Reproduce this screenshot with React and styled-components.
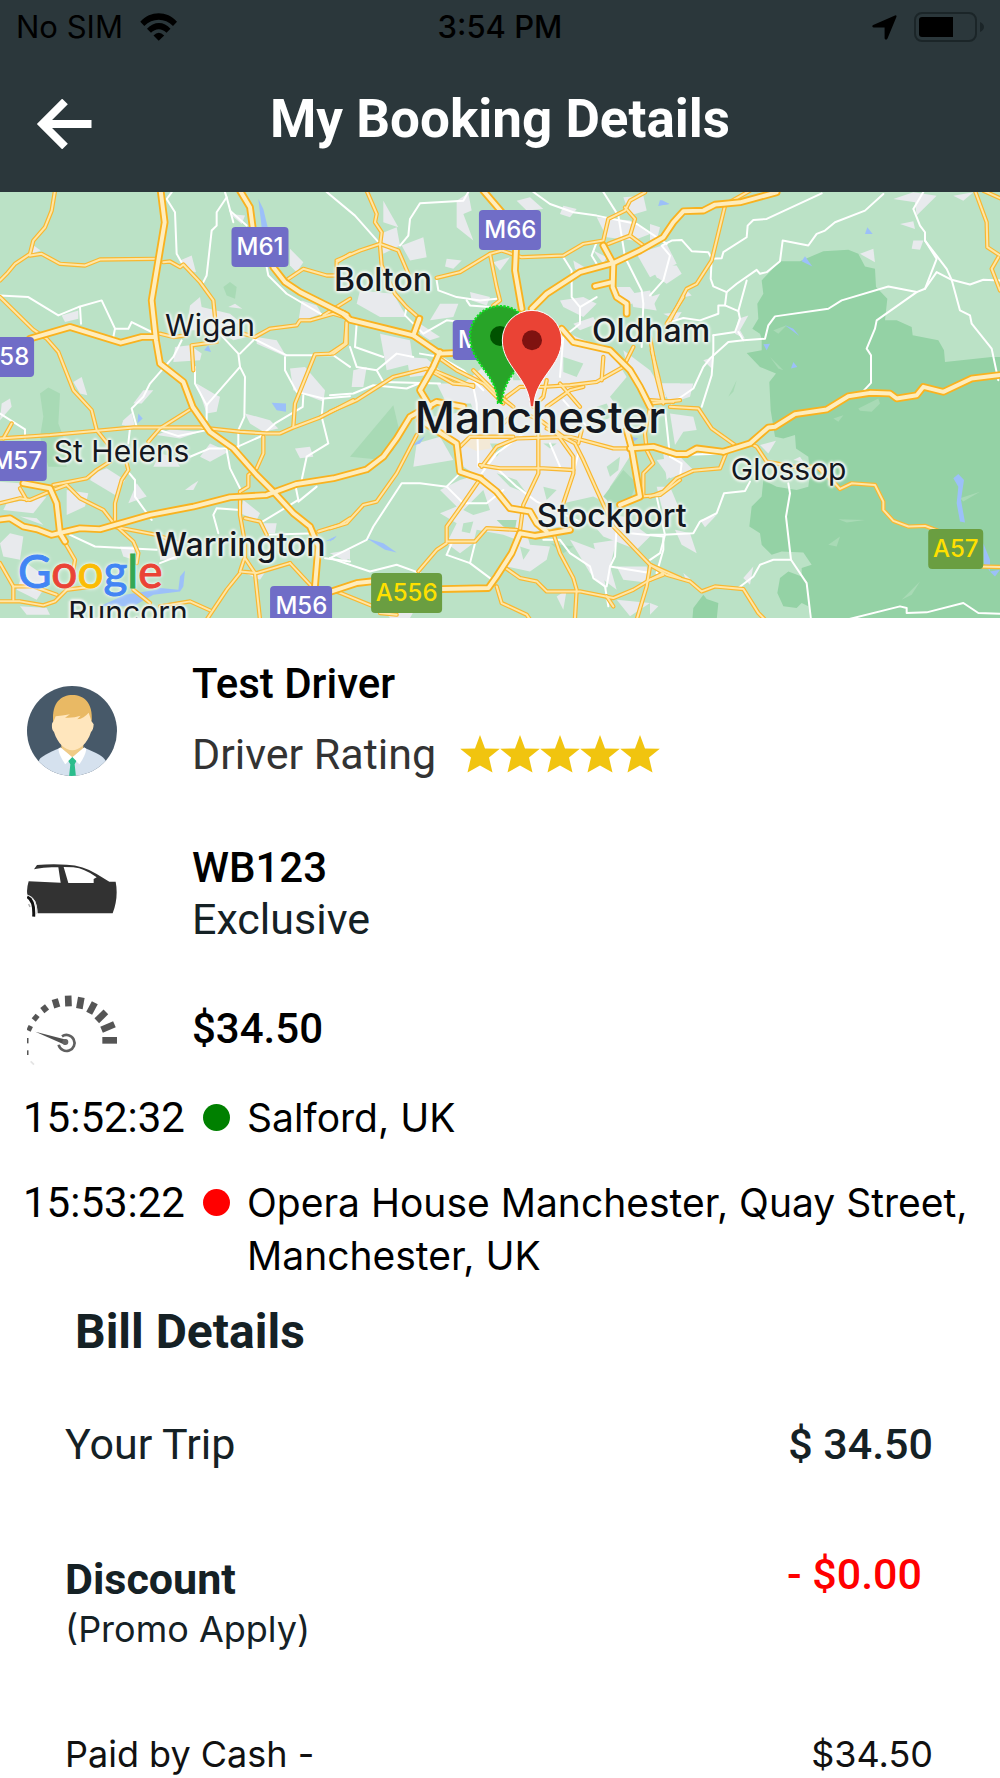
import React from "react";
import styled, { createGlobalStyle } from "styled-components";

const GlobalStyle = createGlobalStyle`
  * {
    box-sizing: border-box;
  }

  body {
    margin: 0;
    background: #ffffff;
    color: #000000;
    font-family: Roboto, sans-serif;
  }

  h1, h2, p, dl, dt, dd, ul {
    margin: 0;
    padding: 0;
  }
`;

const Header = styled.header`
  background: #2b373b;
  padding: 8px 16px 43px;
`;

const StatusBar = styled.div`
  display: grid;
  grid-template-columns: 1fr auto 1fr;
  align-items: center;
  color: #000000;
  font-family: Inter, sans-serif;
  font-size: 31px;
  line-height: 38px;
`;

const StatusGroup = styled.div`
  display: flex;
  align-items: center;
  justify-content: ${({ $end }) => ($end ? "flex-end" : "flex-start")};
  gap: 17px;
`;

const Clock = styled.span`
  font-weight: 500;
`;

const NavBar = styled.div`
  display: grid;
  grid-template-columns: 60px 1fr 60px;
  align-items: center;
  padding: 0 20px;
  margin-top: 43px;
`;

const BackButton = styled.button`
  display: flex;
  align-items: flex-end;
  height: 60px;
  padding: 0;
  border: 0;
  background: none;
  color: #ffffff;
  cursor: pointer;
`;

const Title = styled.h1`
  color: #ffffff;
  font-size: 53px;
  font-weight: 700;
  line-height: 60px;
  text-align: center;
`;

const MapArea = styled.section`
  position: relative;
  height: 426px;
  overflow: hidden;
  background: #bbe2c6;
`;

const MapLayer = styled.svg`
  position: absolute;
  inset: 0;
  width: 100%;
  height: 100%;
`;

const Place = styled.span`
  position: absolute;
  left: ${({ $x }) => ($x / 3000) * 100}%;
  top: ${({ $y }) => (($y - 4) / 1281) * 100}%;
  transform: translate(-50%, -50%);
  color: #14181f;
  font-family: Inter, sans-serif;
  font-size: ${({ $size }) => $size}px;
  font-weight: ${({ $bold }) => ($bold ? 500 : 400)};
  line-height: 1;
  white-space: nowrap;
  text-shadow: 0 0 2px #eef4ef, 2px 0 2px #eef4ef, -2px 0 2px #eef4ef,
    0 2px 2px #eef4ef, 0 -2px 2px #eef4ef, 0 0 4px #eef4ef;
`;

const Shield = styled.span`
  position: absolute;
  left: ${({ $x }) => ($x / 3000) * 100}%;
  top: ${({ $y }) => (($y - 4) / 1281) * 100}%;
  transform: translate(-50%, -50%);
  padding: 0 5px;
  border-radius: 4px;
  background: ${({ $green }) => ($green ? "#6a9e41" : "#706dc7")};
  color: ${({ $green }) => ($green ? "#ffe000" : "#ffffff")};
  font-family: Inter, sans-serif;
  font-size: 24px;
  font-weight: 500;
  line-height: 40px;
`;

const GoogleMark = styled.span`
  position: absolute;
  left: 18px;
  bottom: 19px;
  font-family: Lato, sans-serif;
  font-size: 46px;
  font-weight: 400;
  line-height: 56px;
  -webkit-text-stroke: 1px currentColor;
  text-shadow: 0 0 3px #ffffff, 0 0 5px #ffffff;
`;

const Letter = styled.span`
  color: ${({ $color }) => $color};
`;

const Summary = styled.section`
  padding: 44px 27px 0;
`;

const SummaryRow = styled.div`
  display: grid;
  grid-template-columns: 90px 1fr;
  column-gap: 75px;
  align-items: ${({ $align }) => $align || "center"};
  margin-bottom: ${({ $after }) => $after}px;
`;

const Stack = styled.div`
  display: flex;
  flex-direction: column;
  gap: ${({ $gap }) => $gap}px;
`;

const Strong = styled.p`
  font-size: 42px;
  font-weight: 500;
  line-height: 44px;
`;

const Plain = styled.p`
  display: flex;
  align-items: center;
  gap: 24px;
  color: ${({ $color }) => $color};
  font-size: 43px;
  line-height: 44px;
`;

const Stars = styled.span`
  display: flex;
`;

const Stops = styled.ul`
  display: flex;
  flex-direction: column;
  gap: 32px;
  padding: 0 23px;
  list-style: none;
`;

const Stop = styled.li`
  display: grid;
  grid-template-columns: 163px 27px 1fr;
  column-gap: 17px;
  font-size: 42px;
  line-height: 53px;
`;

const Dot = styled.span`
  width: 27px;
  height: 27px;
  margin-top: 13px;
  border-radius: 50%;
  background: ${({ $color }) => $color};
`;

const Address = styled.span`
  font-family: Inter, sans-serif;
  font-size: 39px;
`;

const Bill = styled.section`
  padding: 22px 67px 0 65px;
  color: #152125;
`;

const BillTitle = styled.h2`
  padding-left: 10px;
  font-size: 48px;
  font-weight: 700;
  line-height: 56px;
`;

const BillRow = styled.dl`
  display: flex;
  justify-content: space-between;
  margin-top: ${({ $before }) => $before}px;
  font-size: 43px;
  line-height: 44px;
`;

const DiscountLabel = styled.dt`
  padding-top: 5px;
  font-weight: 700;
`;

const Note = styled.p`
  margin-top: 6px;
  font-family: Inter, sans-serif;
  font-size: 36px;
  font-weight: 400;
`;

const Amount = styled.dd`
  font-weight: 500;
`;

const Deduction = styled(Amount)`
  padding-right: 11px;
  color: #ff0000;
`;

const PaidRow = styled(BillRow)`
  color: #111111;
  font-family: Inter, sans-serif;
  font-size: 36px;
`;

// Map geometry is kept in three tiles, each with its own x offset.
const TILES = [0, 990, 1950];

const motorways = [
  [
    "482,0 494,95 455,330 468,450 480,520 550,575 578,650 630,725 700,775 770,855 825,910 880,970 930,1010 955,1070 945,1190",
    "90,445 210,410 362,457 425,440 465,440",
    "-10,990 30,985 70,1010 110,1018 155,1035 240,1015 300,1018 450,975 580,950 690,922 800,915 890,882 1000,865 1100,838 1150,800 1190,745 1230,680 1310,635 1390,650",
    "70,880 150,895 170,940 180,1030 195,1055",
    "720,0 750,50 758,110",
    "820,230 855,275 900,305 1040,375",
  ],
  [
    "460,0 520,70",
    "558,175 555,240 575,355",
    "40,370 60,388 250,435 330,490 375,488",
    "268,385 250,435",
    "330,485 310,530 270,600 300,650",
    "5,1205 80,1180 123,1175",
    "337,1198 475,1195 500,1160 545,1090 570,1030 615,1038 720,1020",
    "270,690 310,715 380,760 390,845 450,865 500,905 540,955 600,965 620,1000 650,1025",
    "870,945 930,920 905,775 890,720",
    "605,355 650,310 750,245 850,218 930,180 1000,140 1030,95 1060,62 1120,60 1155,42 1230,35 1340,5",
    "820,165 850,220 848,290 860,320 890,340 890,370",
    "795,287 845,275",
    "695,415 730,455 840,480 900,540 930,590 960,650",
    "900,775 970,770 1040,792 1070,792 1100,775 1180,785",
  ],
  [
    "220,785 300,760 355,712 375,710 435,672 530,658 595,618 660,608 720,610 740,625 800,615 820,590 880,605 965,565 1060,553",
  ],
];

const mainRoads = [
  [
    "165,0 155,60 135,110 100,150 90,190 45,220 20,250 0,270",
    "90,195 125,190 180,220 255,225 300,207 470,205",
    "490,215 510,213 540,230 550,222 600,275 640,330 645,380",
    "0,320 100,418 140,445 175,485 220,600 275,660 290,720 330,770",
    "0,745 150,735 400,712 600,712 720,725 800,730 840,730 880,712 960,682 1060,630",
    "35,700 10,745",
    "575,655 480,715 445,755",
    "480,430 520,440 560,435",
    "730,430 765,440 810,415 890,405 900,390 930,390 1000,370 1050,385",
    "650,455 575,465 580,540",
    "0,940 60,925 90,930 160,900 200,885",
    "60,895 80,930",
    "160,885 260,865 290,840 330,815",
    "200,885 240,925 310,960 345,1005 400,1055 415,1090 410,1120",
    "380,820 385,840 365,870 345,940 345,990",
    "190,1050 225,1110 220,1140",
    "340,1010 470,1035 540,1060",
    "0,1120 40,1190 40,1230",
    "0,1235 60,1235 130,1247 165,1235 200,1200 280,1190",
    "40,1190 100,1190 170,1215",
    "400,1200 450,1240",
    "865,265 910,235 980,255 1010,255 1010,215 1050,190",
    "1040,395 1040,460 1000,490 945,492 885,640 880,710",
    "790,740 790,790 770,835 745,855 745,890 720,905 720,975 735,1060 735,1100 720,1145 770,1150 870,1120",
    "735,985 780,995 800,1035",
    "735,1105 765,1150 780,1290",
    "720,1150 680,1200 620,1290",
    "870,1120 935,1190",
    "955,1025 1020,1005 1050,985",
    "480,1250 570,1235 630,1262",
    "970,375 1050,325",
    "1000,1200 1060,1180",
  ],
  [
    "110,0 140,70 135,95 155,125 150,165 155,225 195,310 230,350 270,385",
    "20,210 90,180 150,160 205,180 235,250",
    "320,262 390,245 480,190 515,180 575,200 700,195 760,160 820,150 835,85 885,60 900,30 945,5",
    "480,190 500,290 510,330 490,345",
    "885,50 915,85 900,135 940,165",
    "835,160 900,135",
    "0,490 45,460 50,395",
    "0,665 80,630 190,560 290,535 370,580 430,585",
    "310,540 430,590",
    "430,540 500,610 550,650",
    "330,505 380,540 460,580 520,640",
    "530,620 570,590 640,590 720,585 800,575 880,530 910,470",
    "820,500 815,570",
    "650,650 720,600 760,590",
    "690,580 750,650",
    "610,650 640,620 650,570",
    "0,1015 50,1000 100,945 140,935 200,850 260,735",
    "455,830 500,770 560,745 720,740 850,775 900,775",
    "450,825 510,835 640,835 730,840",
    "455,860 400,940 350,1010 350,1055 435,1055 470,1015 560,1020",
    "350,1060 320,1080 265,1145",
    "625,720 625,850 580,945 570,1020",
    "650,715 735,760 760,810 800,900 850,1010 960,1125 1050,1165",
    "680,730 730,800 730,850 700,940",
    "550,740 420,740 390,770",
    "520,700 560,660 630,690 700,740",
    "745,760 755,720",
    "1060,320 1010,400",
    "960,640 1050,630",
    "965,480 985,560 1000,630",
    "960,650 945,730 950,780 970,820 940,850 940,915",
    "930,920 990,915 1050,870",
    "520,1130 570,1165 620,1175 650,1205 750,1205 850,1225 910,1200 960,1170 1000,1150",
    "670,1030 690,1090 730,1165 740,1200 735,1285",
    "500,1190 515,1240 590,1275 600,1290",
    "960,1130 950,1190 920,1290",
    "830,1220 850,1250",
    "20,1205 130,1250",
    "150,1270 200,1275",
  ],
  [
    "225,45 185,210 140,280 110,295 60,390",
    "220,45 300,0",
    "0,440 20,560 40,640",
    "0,630 70,635",
    "60,650 145,655 185,715 255,765",
    "300,760 320,770 350,815 430,830 500,830 555,880 570,897 605,880 675,885 700,935 700,960 730,993 775,1010 825,1008 870,1025",
    "230,785 210,835 130,842 80,865 40,905 0,920",
    "0,1125 50,1155 120,1175 155,1205 195,1190 280,1198 325,1270 345,1290",
    "975,0 1010,95 1012,170 1050,195",
    "1045,200 1025,235 1050,300",
    "1000,0 1055,25",
    "980,1130 1060,1132",
    "0,1170 40,1155",
  ],
];

const minorRoads = [
  [
    "515,5 500,25 525,65 530,190 550,225",
    "675,5 680,20 650,65 650,105 635,120 620,255 610,275",
    "680,20 700,95",
    "690,60 740,105",
    "980,4 1065,75 1140,160",
    "0,315 85,320 175,375 235,350 305,330 345,415 385,415 395,395 455,425",
    "240,350 243,400",
    "345,415 340,440",
    "800,230 805,255 860,310 970,375",
    "545,450 520,500 450,580 430,620 395,655 410,710",
    "585,530 585,580 620,645 720,530 715,490 650,420",
    "720,490 760,450",
    "720,530 735,560 733,680 715,720 715,775",
    "620,645 620,690",
    "760,445 860,495 1000,495 1050,530",
    "855,500 855,540 890,605 970,625 1050,618",
    "910,615 908,650 825,700 780,740 690,780",
    "970,625 965,680 985,760 920,800 905,870",
    "390,715 385,760",
    "380,840 405,870 405,920 455,990",
    "680,780 690,835 720,895",
    "570,800 630,775 680,775",
    "720,960 650,955 640,975 655,1030",
    "0,670 75,718 75,745",
    "210,1035 285,1070 470,1080",
    "885,880 895,930 780,1000",
    "950,890 895,935",
    "800,1035 950,1030",
    "975,1105 1050,1115",
    "480,720 535,738 620,720",
    "480,1120 530,1100",
  ],
  [
    "415,4 400,30 270,38 240,85 235,135 210,165",
    "610,4 660,40 730,65 800,75 920,100 1010,160",
    "820,4 865,75 885,200 935,300 940,340 935,470",
    "320,270 325,300 380,320 450,330 500,325",
    "410,330 420,345 480,350",
    "230,350 225,375 280,430 350,390 440,400",
    "270,490 330,500 400,540 460,600",
    "0,615 70,610 130,585 230,595 290,570",
    "60,470 80,530 140,540 200,490 250,500",
    "140,540 160,575 330,580",
    "80,400 75,470 160,500",
    "700,200 725,240 725,320 750,350 750,400 700,440 690,560",
    "750,350 800,320",
    "800,155 785,195 800,220",
    "0,1105 110,1050 130,1010 215,880 270,880 350,890 400,940 470,940 520,900",
    "0,1105 120,1145 200,1125 270,1150",
    "435,1060 420,1120 350,1095",
    "420,1120 480,1165",
    "350,1095 365,1060",
    "500,835 560,890 620,935 760,1000",
    "640,1050 690,1050 720,1090 780,1130 790,1165 825,1190 835,1250",
    "860,1010 855,1100 840,1130 830,1190",
    "840,1130 960,1150",
    "430,590 440,640 445,830",
    "660,760 690,830",
    "580,730 500,790 455,850",
    "730,850 745,790",
    "855,1000 900,1030 1000,1040 1000,1080 980,1150",
    "980,1150 1050,1165",
    "350,890 390,850",
    "700,630 780,720",
  ],
  [
    "515,8 350,85 310,88 293,105 290,140 220,185 215,203 185,205 175,185 125,182 95,148 65,150 35,165 60,195 40,270 0,315",
    "185,205 182,265 190,288 230,305 225,345 265,362 290,270",
    "230,305 260,280 320,238 330,250 350,245 390,212 398,150 475,165 500,130 525,120 555,95 645,60 700,10",
    "265,362 270,385 255,425 190,435",
    "225,345 205,345 205,370 150,390 100,383 60,395",
    "265,425 280,450 345,445 355,405 375,378 535,355 575,330 715,288 800,305 825,295 860,245 905,268 960,282 1000,268 1050,270",
    "280,450 235,455 180,505 160,530 130,595 65,640",
    "190,435 190,485 185,555 155,650",
    "820,4 790,55 810,105 825,125 825,150 890,235 905,268 930,360 960,375 965,400 1025,475 1045,570",
    "825,150 860,205 825,295",
    "800,305 680,390 675,415 650,475 663,495 663,578 635,608",
    "45,660 60,800 95,820 90,860",
    "95,795 220,790",
    "300,875 285,903 222,910 200,970 150,995 130,1030 40,1035 0,1035",
    "415,880 420,910 408,980 423,1110 470,1180 483,1290",
    "423,1110 370,1110 330,1125 310,1160 265,1195",
    "590,1290 750,1250 770,1255 770,1270 830,1268 940,1240 985,1270 1050,1272",
    "20,920 45,1035 30,1090 0,1110",
  ],
];

const urban = [
  [
    "95,160 122,180 95,190",
    "540,210 575,195 588,245 565,240",
    "570,345 600,320 605,350 690,370 720,395 670,420 740,440 700,450 655,420 560,420",
    "525,470 570,465 605,490 600,510 520,515",
    "770,440 830,450 860,500 770,460",
    "870,535 915,530 975,600 970,635 880,600",
    "870,175 910,215 890,245 870,225",
    "685,350 705,340 727,355",
    "905,330 950,345 965,370 895,395",
    "220,575 245,560 262,615 240,610",
    "185,375 235,360 235,385 195,395",
    "430,600 460,600 425,640 400,640",
    "590,580 650,615 660,620 650,665 620,670",
    "735,670 810,690 835,715 790,725 750,700",
    "370,690 395,668 405,710 365,705",
    "470,735 510,718 600,725 540,745",
    "600,800 630,760 685,785 630,815",
    "885,775 930,770 940,800 900,805",
    "690,70 735,75 725,100",
    "5,640 30,625 35,650 0,690",
    "0,875 60,880 80,920 0,940",
    "20,940 140,920 100,970 10,960",
    "200,900 265,910 255,950 200,975",
    "280,850 320,835 375,870 345,915 270,870",
    "385,940 410,880 440,920",
    "60,980 110,985 130,1005",
    "0,1060 30,1030 70,1040 60,1110 10,1100",
    "80,1120 150,1170 110,1230 50,1200",
    "60,1250 140,1255 150,1275 80,1275",
    "555,900 575,885 595,872 580,900",
    "480,790 520,800 540,830 460,830",
    "730,930 780,970 770,990 720,970",
    "790,1000 830,1000 825,1030 800,1030",
    "360,1070 405,1070 400,1110 370,1100",
    "990,1090 1050,1080 1050,1110",
    "480,1035 540,1060 530,1110 480,1110",
    "735,1150 800,1140 780,1170",
  ],
  [
    "150,130 200,110 210,165 160,190",
    "215,165 280,140 290,200 240,210",
    "90,300 190,310 230,380 150,380 80,340",
    "330,340 385,340 370,380 300,390",
    "160,30 205,110 160,95",
    "380,30 415,8 425,60 400,70 430,150 380,110",
    "490,215 540,200 510,240",
    "350,205 395,210 370,235 345,228",
    "420,305 480,320 470,345 425,330",
    "560,30 600,20 640,55 590,60",
    "700,45 740,55 720,80 690,70",
    "800,80 900,90 960,130 910,150 830,140",
    "880,20 940,15 950,60 900,75",
    "790,180 830,200 820,220",
    "730,210 780,240 760,250 735,235",
    "690,330 760,320 800,340 760,380 700,350",
    "920,190 1010,160 1040,220 960,260",
    "850,290 900,290 930,330 880,350",
    "900,310 960,300 980,360 910,350",
    "730,400 790,380 800,400 750,420",
    "70,540 110,530 100,590 65,590",
    "150,430 240,450 250,520 170,540",
    "230,500 290,505 340,550 240,560",
    "270,400 330,440 300,450 270,430",
    "320,580 420,580 440,640 350,640",
    "400,580 460,530 530,500 640,470 700,420 740,440 840,480 890,560 840,620 890,690 905,790 880,830 840,890 830,940 790,920 700,940 690,1010 590,1030 600,1065 660,1070 650,1110 600,1145 530,1130 560,1050 520,1035 440,1020 430,1060 390,1090 350,1060 380,1000 330,970 380,950 330,900 390,870 440,855 400,830 390,770 320,710 310,680 430,660",
    "260,760 330,740 370,810 250,830",
    "880,480 960,540 1010,620 960,650 900,560",
    "720,1050 800,1080 830,1200 780,1150",
    "790,1060 860,1050 840,1130 860,1200 820,1170",
    "860,1130 950,1130 960,1180 880,1170",
    "860,1230 960,1240 900,1280",
    "760,970 880,980 960,1040 920,1080 820,1040",
    "1000,790 1060,820 1010,870",
    "970,580 1050,580 1040,620",
    "680,1220 710,1200 700,1260",
    "0,1090 60,1090 50,1115",
    "160,1260 260,1250 240,1285 180,1285",
  ],
  [
    "0,225 80,225 95,250 50,280 20,260",
    "0,100 30,110 20,150 0,150",
    "40,370 95,365 80,390",
    "110,300 125,315 105,320",
    "265,385 295,375 270,420 285,445 255,430",
    "30,580 130,580 120,620 60,640",
    "160,510 190,500 185,535",
    "60,670 130,680 140,720 100,725 75,765",
    "20,810 90,800 130,840 60,865",
    "730,25 790,5 860,15 800,75 795,35",
    "630,190 670,175 675,215",
    "750,100 790,92 795,115",
    "790,150 820,150 810,178 785,175",
    "910,15 970,5 940,30",
    "330,765 378,752 355,790",
    "0,320 30,310 10,345",
    "20,890 60,890 85,950 40,970",
    "75,1020 120,1030 140,1090 95,1065",
    "280,1165 310,1130 300,1185",
    "150,990 200,975 165,1012",
    "100,1150 130,1175 110,1178",
    "0,1240 25,1250 0,1275",
    "430,810 450,800 460,815",
  ],
];

const moor =
  "390,212 450,212 520,182 595,178 625,190 645,228 675,235 678,290 712,325 705,390 740,390 785,410 788,435 865,450 882,480 885,515 1025,500 1060,500 1060,1290 480,1290 475,1250 455,1240 440,1255 400,1250 382,1210 390,1165 415,1145 455,1160 455,1135 485,1125 460,1088 395,1085 365,1095 335,1065 330,1030 298,1010 305,950 335,920 340,870 380,890 440,900 475,890 480,850 475,800 438,775 435,735 400,745 375,740 362,660 358,575 378,550 330,530 290,488 335,480 335,445 330,430 307,415 325,385 322,340 340,310 335,270";

const dale = "127,1290 130,1255 160,1215 170,1228 205,1240 200,1290";

const parks = [
  [
    "120,610 145,592 180,610 175,700 190,740 200,830 145,830 120,740 130,680",
    "670,290 690,275 710,290 705,325 680,315",
  ],
  [
    "60,800 190,645 210,730 190,780 160,810",
    "820,920 880,840 920,880 900,930 840,940",
    "500,990 560,990 555,1020 520,1010",
    "660,1060 730,1070 700,1090",
  ],
  [
    "370,420 410,405 385,430",
    "360,500 400,540 385,535",
    "625,655 685,625 690,640 665,665 630,662",
    "550,685 580,675 565,695",
    "930,925 990,905 940,935",
    "565,988 645,990 590,998",
    "755,1230 810,1175 785,1215",
    "235,620 260,570 250,605",
    "535,1065 570,1040 560,1070",
  ],
];

const greens = [
  [],
  [
    "545,545 590,535 580,570 550,570",
    "700,500 760,520 740,560 700,545",
    "800,650 830,640 850,680 820,690",
    "480,760 530,760 500,800",
    "640,760 680,760 660,775",
    "500,850 560,870 590,910 540,890",
    "460,900 480,960 430,975 400,960",
    "830,830 870,800 865,840 840,860",
    "570,1070 600,1080 580,1110",
    "400,1000 430,995 420,1030 395,1025",
    "640,890 680,900 650,930",
  ],
  [],
];

const water = [
  [
    "775,25 790,55 803,110 785,110",
    "612,480 625,465 633,485",
    "815,638 858,640 858,665 830,660",
    "415,670 428,685 412,700",
    "375,1215 470,1200 480,1195 535,1200 540,1160 555,1142 550,1190 540,1205 460,1215 400,1250 300,1250",
    "975,1055 1010,1038 1000,1050",
  ],
  [
    "985,45 990,28 1018,40",
    "110,1045 160,1060 200,1088 165,1080",
    "905,740 925,745 910,755",
    "240,770 285,738 270,760",
    "0,1048 20,1040 0,1055",
  ],
  [
    "25,45 35,28 58,40",
    "645,130 652,110 668,130",
    "455,212 465,197 487,228",
    "340,462 360,460 350,480",
    "423,535 430,515 442,530",
    "405,405 430,415 448,437",
    "910,865 925,852 942,870 933,930 945,998 930,995 920,940 925,890",
    "1000,1060 1020,1110 1020,1145 1002,1120",
    "1020,1145 1050,1140 1035,1160",
  ],
];

const places = [
  { name: "Wigan", x: 630, y: 403, size: 30 },
  { name: "St Helens", x: 365, y: 783, size: 30 },
  { name: "Warrington", x: 721, y: 1065, size: 32, bold: true },
  { name: "Runcorn", x: 384, y: 1268, size: 30 },
  { name: "Bolton", x: 1149, y: 268, size: 32, bold: true },
  { name: "Oldham", x: 1953, y: 421, size: 32, bold: true },
  { name: "Manchester", x: 1620, y: 680, size: 44, bold: true },
  { name: "Stockport", x: 1835, y: 977, size: 32, bold: true },
  { name: "Glossop", x: 2366, y: 838, size: 30 },
];

const shields = [
  { name: "M61", x: 780, y: 170 },
  { name: "M66", x: 1531, y: 118 },
  { name: "M58", x: 10, y: 501 },
  { name: "M57", x: 50, y: 814 },
  { name: "M56", x: 904, y: 1250 },
  { name: "M60", x: 1453, y: 449 },
  { name: "A556", x: 1220, y: 1209, green: true },
  { name: "A57", x: 2867, y: 1077, green: true },
];

const googleLetters = [
  ["G", "#4285f4"],
  ["o", "#ea4335"],
  ["o", "#fbbc04"],
  ["g", "#4285f4"],
  ["l", "#34a853"],
  ["e", "#ea4335"],
];

function Shapes({ tiles, fill }) {
  return TILES.map((x, i) => (
    <g key={x} transform={`translate(${x} 0)`} fill={fill}>
      {tiles[i].map((points) => (
        <polygon key={points} points={points} />
      ))}
    </g>
  ));
}

function Roads({ tiles, color, width }) {
  return TILES.map((x, i) => (
    <g
      key={x}
      transform={`translate(${x} 0)`}
      fill="none"
      stroke={color}
      strokeWidth={width}
      strokeLinejoin="round"
      strokeLinecap="round"
    >
      {tiles[i].map((points) => (
        <polyline key={points} points={points} />
      ))}
    </g>
  ));
}

function RouteMap() {
  return (
    <MapArea aria-label="Trip map">
      <MapLayer viewBox="0 4 3000 1281" preserveAspectRatio="none" aria-hidden="true">
        <g transform="translate(1950 0)" fill="#94d2a5">
          <polygon points={moor} />
          <polygon points={dale} />
        </g>
        <Shapes tiles={urban} fill="#e8eaed" />
        <Shapes tiles={parks} fill="#a8dab5" />
        <Shapes tiles={greens} fill="#bbe2c6" />
        <Shapes tiles={water} fill="#9cc0f9" />
        <polygon points="1390,765 1410,740 1470,745 1470,775 1430,783" fill="#f3e9d6" />
        <Roads tiles={minorRoads} color="#ffffff" width={6} />
        <Roads tiles={mainRoads} color="#f9b730" width={13} />
        <Roads tiles={mainRoads} color="#ffe6a6" width={6} />
        <Roads tiles={motorways} color="#f9b21f" width={23} />
        <Roads tiles={motorways} color="#ffedbd" width={12} />
      </MapLayer>
      {places.map((p) => (
        <Place key={p.name} $x={p.x} $y={p.y} $size={p.size} $bold={p.bold}>
          {p.name}
        </Place>
      ))}
      {shields.map((s) => (
        <Shield key={s.name} $x={s.x} $y={s.y} $green={s.green}>
          {s.name}
        </Shield>
      ))}
      <MapLayer viewBox="0 4 3000 1281" preserveAspectRatio="none" aria-hidden="true">
        <path
          d="M1506 638H1494C1492 550 1410 520 1410 437A90 90 0 0 1 1590 437C1590 520 1508 550 1506 638Z"
          fill="#28a428"
          stroke="#12dc22"
          strokeWidth="7"
          strokeDasharray="7 4"
        />
        <circle cx="1500" cy="437" r="30" fill="#005200" />
        <path
          d="M1601 650H1591C1588 560 1507 530 1507 449A89 89 0 0 1 1685 449C1685 530 1604 560 1601 650Z"
          fill="#ea4335"
          stroke="#ffffff"
          strokeWidth="3"
        />
        <circle cx="1596" cy="450" r="30" fill="#7f1210" />
      </MapLayer>
      <GoogleMark>
        {googleLetters.map(([letter, color], i) => (
          <Letter key={i} $color={color}>
            {letter}
          </Letter>
        ))}
      </GoogleMark>
    </MapArea>
  );
}

function WifiIcon() {
  return (
    <svg width="38" height="28" viewBox="0 0 38 28" aria-hidden="true">
      <path d="M.3 8.800C10.500-2.500 27-2.500 37 8.800L33 13C25 4.800 12.500 4.800 4.300 13Z" />
      <path d="M7 15.800C14 8 24 8 30.500 15.800L26.500 19.800C22 15 15.500 15 11 19.800Z" />
      <path d="M13.500 22.500Q18.700 17 24.200 22.500L18.700 27.700Z" />
    </svg>
  );
}

function LocationIcon() {
  return (
    <svg width="25" height="25" viewBox="0 0 25 25" aria-hidden="true">
      <path d="M23 .4Q25 0 24.400 2L15.500 23.600Q14.200 25.800 12.600 23.500V12.400H1.600Q-.8 11.400 1.200 10Z" />
    </svg>
  );
}

function BatteryIcon() {
  return (
    <svg width="70" height="30" viewBox="0 0 70 30" aria-hidden="true">
      <rect x="1" y="1" width="61" height="28" rx="7" fill="none" stroke="#1b2528" strokeWidth="2" />
      <path d="M8 5H39V25H8Q5 25 5 22V8Q5 5 8 5Z" />
      <path d="M66 10Q70 12 70 15T66 20Z" fill="#1b2528" />
    </svg>
  );
}

function BackIcon() {
  return (
    <svg width="56" height="50" viewBox="0 0 56 50" aria-hidden="true">
      <path
        d="M29 2.500L6.500 25L29 47.500M6.500 25H55.500"
        fill="none"
        stroke="currentColor"
        strokeWidth="8"
      />
    </svg>
  );
}

function Avatar() {
  return (
    <svg width="90" height="90" viewBox="81 75 270 270" aria-hidden="true">
      <clipPath id="face">
        <circle cx="216" cy="210" r="135" />
      </clipPath>
      <g clipPath="url(#face)">
        <rect x="81" y="75" width="270" height="270" fill="#475969" />
        <path d="M100 360L118 296Q124 284 180 261H254Q308 282 316 298L340 360Z" fill="#d5e1ee" />
        <path d="M184 245H250V262L217 290L184 262Z" fill="#f0cb87" />
        <path d="M181 259L217 289L196 310Q178 285 175 264Z" fill="#fff" />
        <path d="M253 259L217 289L238 310Q256 285 259 264Z" fill="#fff" />
        <path d="M217 288L229 300L224 310L228 348H207L211 310L205 300Z" fill="#2bbd8c" />
        <path
          d="M160 180C160 130 190 115 217 115C245 115 274 130 274 180L281 190Q280 208 273 213C262 248 238 268 217 268S173 248 162 213Q154 205 156 188Z"
          fill="#ffe6bd"
        />
        <path
          d="M160 183C154 124 185 102 217 102C250 102 280 124 275 182L266 155Q252 172 232 175L242 164Q220 172 195 170L210 160Q185 165 167 166Z"
          fill="#e9b964"
        />
      </g>
    </svg>
  );
}

function CarIcon() {
  return (
    <svg width="90" height="60" viewBox="81 70 270 180" aria-hidden="true">
      <path
        fillRule="evenodd"
        fill="#323232"
        d="M102 86L111 73Q155 69 200 72Q250 74 290 100L328 123H347Q356 170 338 218H113Q112 170 82 162Q79 145 86 122L182 126L175 80Q135 78 110 84ZM191 79L205 127H281V115L290 110Q255 84 220 80Z"
      />
      <path d="M82 168Q104 180 101 228" fill="none" stroke="#111" strokeWidth="9" />
      <path d="M82 163Q114 174 109 220" fill="none" stroke="#ddd" strokeWidth="3" />
      <path d="M86 190L90 199" stroke="#aaa" strokeWidth="4" />
    </svg>
  );
}

// Each tick: centre x, centre y, rotation, width, length
const ticks = [
  [83, 629, 90, 14, 5],
  [82, 593, 90, 16, 7],
  [89, 556, -65, 16, 14],
  [107, 524, -50, 18, 16],
  [134, 497, -38, 18, 20],
  [168, 481, -17, 19, 26],
  [205, 474, -2, 20, 32],
  [241, 480, 10, 20, 34],
  [276, 495, 28, 20, 36],
  [304, 520, 46, 20, 38],
  [324, 552, 67, 20, 42],
  [330, 592, 90, 20, 46],
];

function GaugeIcon() {
  return (
    <svg width="90" height="80" viewBox="81 438 270 240" aria-hidden="true">
      {ticks.map(([x, y, angle, w, len]) => (
        <rect
          key={angle + x}
          x={x - w / 2}
          y={y - len / 2}
          width={w}
          height={len}
          fill="#555"
          transform={`rotate(${angle} ${x} ${y})`}
        />
      ))}
      <path d="M106 566L202 591L196 606Z" fill="#505050" />
      <path d="M186 580A24 24 0 1 1 176 605" fill="none" stroke="#606060" strokeWidth="8" />
      <circle cx="196" cy="597" r="9" fill="#666" />
      <path d="M92 655L102 665" stroke="#e4e4e4" strokeWidth="5" />
    </svg>
  );
}

function Star() {
  return (
    <svg width="40" height="38" viewBox="0 0 40 38" aria-hidden="true">
      <polygon
        fill="#f1c40f"
        points="20,0 25,13.500 39.800,13.700 29,22.600 32.500,37.500 20,30.500 7.500,37.500 11,22.600 0.200,13.700 15,13.500"
      />
    </svg>
  );
}

function App() {
  return (
    <>
      <GlobalStyle />
      <Header>
        <StatusBar>
          <StatusGroup>
            <span>No SIM</span>
            <WifiIcon />
          </StatusGroup>
          <Clock>3:54 PM</Clock>
          <StatusGroup $end>
            <LocationIcon />
            <BatteryIcon />
          </StatusGroup>
        </StatusBar>
        <NavBar>
          <BackButton type="button" aria-label="Back">
            <BackIcon />
          </BackButton>
          <Title>My Booking Details</Title>
        </NavBar>
      </Header>
      <main>
        <RouteMap />
        <Summary>
          <SummaryRow $align="end" $after={70}>
            <Avatar />
            <Stack $gap={26}>
              <Strong>Test Driver</Strong>
              <Plain $color="#333333">
                Driver Rating
                <Stars role="img" aria-label="5 stars">
                  {[1, 2, 3, 4, 5].map((n) => (
                    <Star key={n} />
                  ))}
                </Stars>
              </Plain>
            </Stack>
          </SummaryRow>
          <SummaryRow $after={48}>
            <CarIcon />
            <Stack $gap={7}>
              <Strong>WB123</Strong>
              <Plain $color="#152125">Exclusive</Plain>
            </Stack>
          </SummaryRow>
          <SummaryRow $after={22}>
            <GaugeIcon />
            <Strong>$34.50</Strong>
          </SummaryRow>
        </Summary>
        <Stops>
          <Stop>
            <time>15:52:32</time>
            <Dot $color="#008000" />
            <Address>Salford, UK</Address>
          </Stop>
          <Stop>
            <time>15:53:22</time>
            <Dot $color="#ff0000" />
            <Address>Opera House Manchester, Quay Street, Manchester, UK</Address>
          </Stop>
        </Stops>
        <Bill>
          <BillTitle>Bill Details</BillTitle>
          <BillRow $before={62}>
            <dt>Your Trip</dt>
            <Amount>$ 34.50</Amount>
          </BillRow>
          <BillRow $before={86}>
            <DiscountLabel>
              Discount
              <Note>(Promo Apply)</Note>
            </DiscountLabel>
            <Deduction>- $0.00</Deduction>
          </BillRow>
          <PaidRow $before={81}>
            <dt>Paid by Cash -</dt>
            <dd>$34.50</dd>
          </PaidRow>
        </Bill>
      </main>
    </>
  );
}

export default App;
